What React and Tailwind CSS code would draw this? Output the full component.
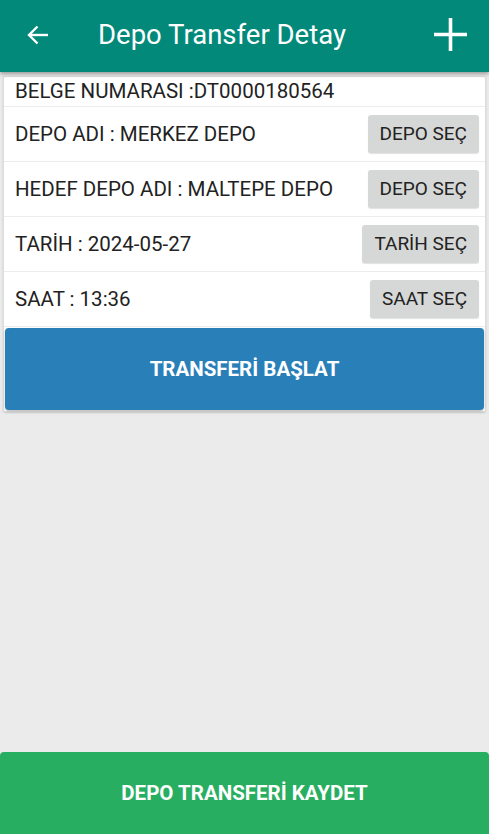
const rows = [
  { label: "DEPO ADI : MERKEZ DEPO", action: "DEPO SEÇ" },
  { label: "HEDEF DEPO ADI : MALTEPE DEPO", action: "DEPO SEÇ" },
  { label: "TARİH : 2024-05-27", action: "TARİH SEÇ" },
  { label: "SAAT : 13:36", action: "SAAT SEÇ" },
];

export default function App() {
  return (
    <div
      className="flex flex-col h-[834px] w-[489px] bg-[#ebebeb] overflow-hidden"
      style={{ fontFamily: "Roboto, 'Liberation Sans', sans-serif" }}
    >
      <div className="relative z-10 h-[72px] shrink-0 bg-[#02897a] flex items-center pb-[3px] shadow-[0_2px_4px_rgba(0,0,0,0.35)]">
        <div className="w-[76px] flex justify-center pr-[1px]">
          <svg width="26" height="26" viewBox="0 0 26 26" fill="none" stroke="white" strokeWidth="2.4">
            <path d="M23 13H4" />
            <path d="M12.5 4.5L4 13l8.5 8.5" />
          </svg>
        </div>
        <div className="ml-[22px] text-white text-[27.5px] leading-none">Depo Transfer Detay</div>
        <div className="ml-auto mr-[21px]">
          <svg width="35" height="35" viewBox="0 0 35 35" fill="none" stroke="white" strokeWidth="3.6">
            <path d="M17.5 1v33" />
            <path d="M1 17.5h33" />
          </svg>
        </div>
      </div>

      <div className="mx-[3px] mt-[4px] bg-white border border-[#dcdcdc] rounded-[2px] shadow-[0_1px_2px_rgba(0,0,0,0.15)]">
        <div className="h-[30px] flex items-center px-[11px] text-[20.5px] text-[#222] border-b border-[#ececec]">
          BELGE NUMARASI :DT0000180564
        </div>
        {rows.map((r) => (
          <div
            key={r.label}
            className="h-[55px] flex items-center justify-between pl-[11px] pr-[6px] border-b border-[#ececec]"
          >
            <span className="text-[20.5px] text-[#222]">{r.label}</span>
            <button className="h-[38px] px-[12px] bg-[#d6d7d7] rounded-[3px] text-[19px] text-[#222] shadow-[0_1px_1px_rgba(0,0,0,0.12)]">
              {r.action}
            </button>
          </div>
        ))}
        <div className="p-[1px]">
          <button className="w-full h-[82px] bg-[#2980b9] rounded-[4px] text-white font-bold text-[20.5px] shadow-[0_1px_2px_rgba(0,0,0,0.3)]">
            TRANSFERİ BAŞLAT
          </button>
        </div>
      </div>

      <div className="flex-1" />

      <button className="h-[82px] shrink-0 w-full bg-[#27ae60] rounded-t-[4px] text-white font-bold text-[20.5px]">
        DEPO TRANSFERİ KAYDET
      </button>
    </div>
  );
}
